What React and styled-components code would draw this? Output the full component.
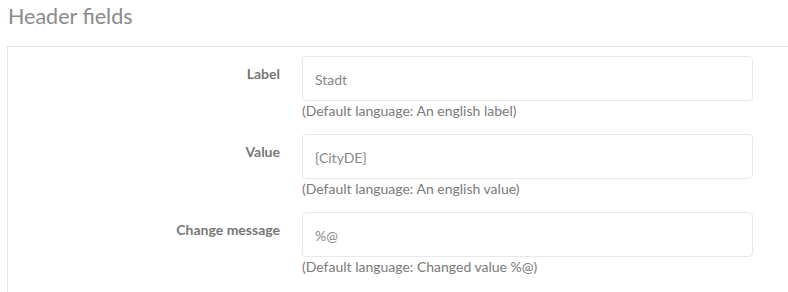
import React from "react";
import styled, { createGlobalStyle } from "styled-components";

const Global = createGlobalStyle`
  html, body { margin: 0; padding: 0; background: #fff; }
  body { font-family: Lato, "Open Sans", sans-serif; overflow: hidden; }
`;

const Page = styled.div`
  width: 788px;
  height: 292px;
  overflow: hidden;
`;

const Title = styled.h2`
  margin: 0;
  padding: 3px 0 0 8px;
  height: 46px;
  box-sizing: border-box;
  font-size: 21.5px;
  font-weight: 400;
  line-height: 26px;
  color: #8a8a8a;
`;

const Panel = styled.div`
  margin-left: 7px;
  border-top: 1px solid #e6e6e6;
  border-left: 1px solid #e6e6e6;
  padding: 9px 35px 20px 0;
  display: flex;
  flex-direction: column;
  gap: 14px;
`;

const Row = styled.div`
  display: grid;
  grid-template-columns: 272px 1fr;
  column-gap: 22px;
`;

const Label = styled.label`
  text-align: right;
  font-size: 14px;
  font-weight: 700;
  line-height: 18px;
  color: #777;
  padding-top: 9px;
`;

const Field = styled.div`
  display: flex;
  flex-direction: column;
`;

const Input = styled.div`
  box-sizing: border-box;
  height: 45px;
  border: 1px solid #e8e8e8;
  border-radius: 4px;
  padding: 2px 12px 0;
  display: flex;
  align-items: center;
  font-size: 14px;
  color: #888;
`;

const Help = styled.div`
  margin-top: 1px;
  font-size: 14px;
  line-height: 18px;
  color: #7a7a7a;
`;

const fields = [
  { label: "Label", value: "Stadt", help: "(Default language: An english label)" },
  { label: "Value", value: "{CityDE}", help: "(Default language: An english value)" },
  { label: "Change message", value: "%@", help: "(Default language: Changed value %@)" },
];

export default function App() {
  return (
    <Page>
      <Global />
      <Title>Header fields</Title>
      <Panel>
        {fields.map((f) => (
          <Row key={f.label}>
            <Label>{f.label}</Label>
            <Field>
              <Input>{f.value}</Input>
              <Help>{f.help}</Help>
            </Field>
          </Row>
        ))}
      </Panel>
    </Page>
  );
}
